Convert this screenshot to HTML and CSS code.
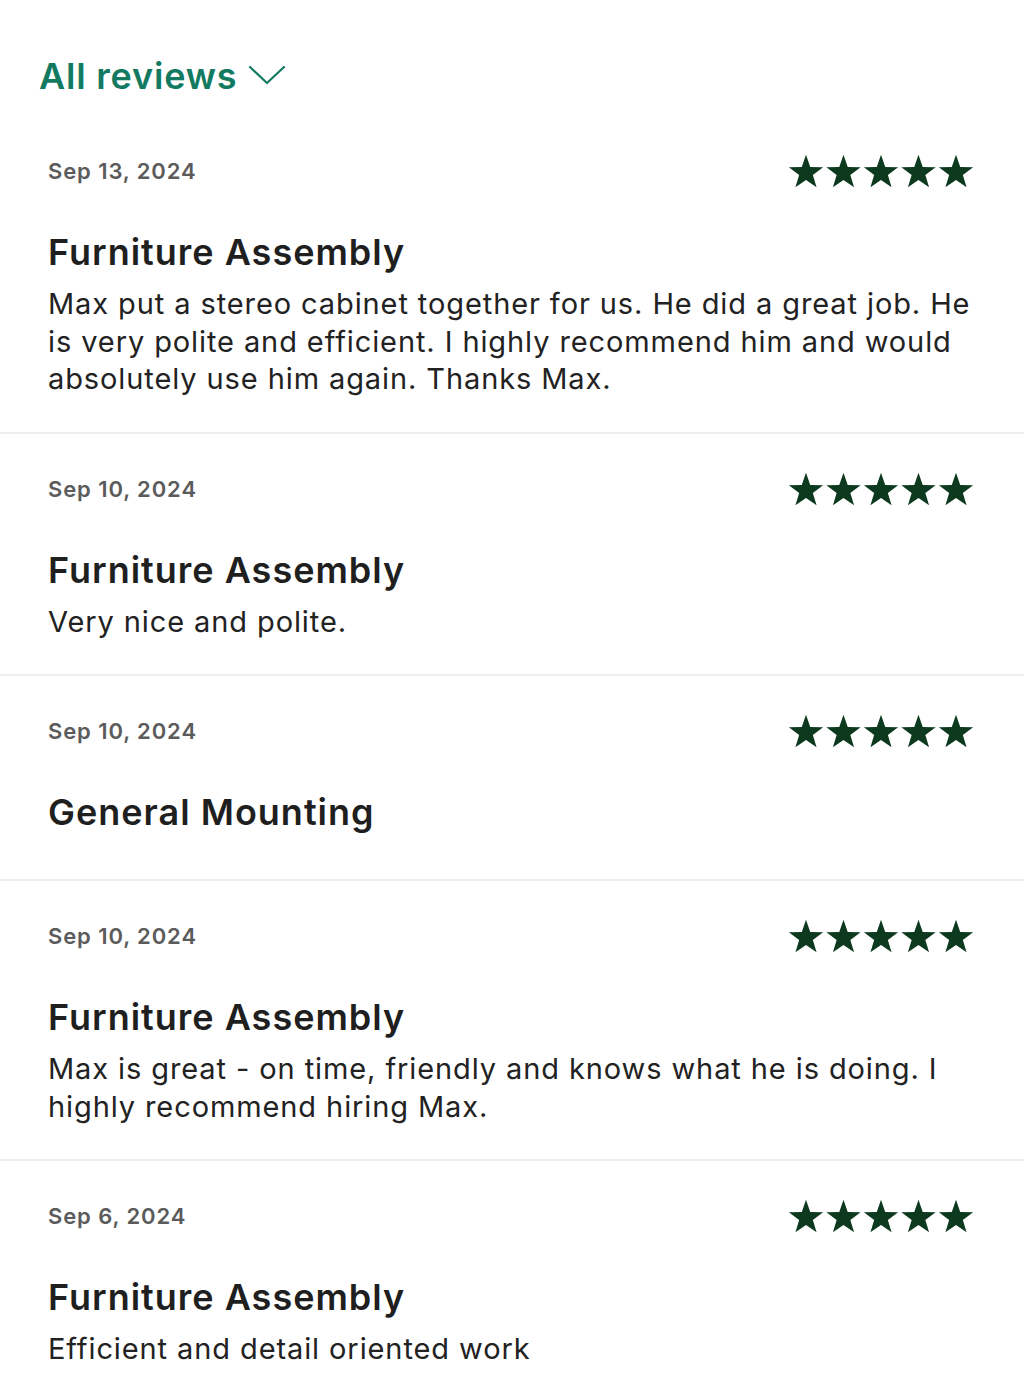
FILE: index.html
```html
<!DOCTYPE html>
<html lang="en">
<head>
<meta charset="utf-8">
<title>Reviews</title>
<link rel="stylesheet" href="styles.css">
</head>
<body>
<svg width="0" height="0" class="defs" aria-hidden="true">
  <defs>
    <path id="star" d="M0,-18 L4.23,-5.82 17.12,-5.56 6.85,2.22 10.58,14.56 0,7.2 -10.58,14.56 -6.85,2.22 -17.12,-5.56 -4.23,-5.82Z"/>
    <g id="stars5">
      <use href="#star" x="18" y="18.7"/>
      <use href="#star" x="55.5" y="18.7"/>
      <use href="#star" x="93" y="18.7"/>
      <use href="#star" x="130.5" y="18.7"/>
      <use href="#star" x="168" y="18.7"/>
    </g>
  </defs>
</svg>
<main class="page">
  <header class="filter">
    <span class="filter-label">All reviews</span>
    <svg class="chevron" width="38" height="24" viewBox="0 0 38 24"><path d="M2 4 L19 20 L36 4" fill="none" stroke="currentColor" stroke-width="2.2" stroke-linecap="round" stroke-linejoin="round"/></svg>
  </header>

  <section class="review">
    <div class="review-top">
      <span class="date">Sep 13, 2024</span>
      <svg class="stars" width="186" height="34" viewBox="0 0 186 34"><use href="#stars5"/></svg>
    </div>
    <h2 class="title">Furniture Assembly</h2>
    <p class="body">Max put a stereo cabinet together for us. He did a great job. He is very polite and efficient. I highly recommend him and would absolutely use him again. Thanks Max.</p>
  </section>

  <section class="review">
    <div class="review-top">
      <span class="date">Sep 10, 2024</span>
      <svg class="stars" width="186" height="34" viewBox="0 0 186 34"><use href="#stars5"/></svg>
    </div>
    <h2 class="title">Furniture Assembly</h2>
    <p class="body">Very nice and polite.</p>
  </section>

  <section class="review">
    <div class="review-top">
      <span class="date">Sep 10, 2024</span>
      <svg class="stars" width="186" height="34" viewBox="0 0 186 34"><use href="#stars5"/></svg>
    </div>
    <h2 class="title">General Mounting</h2>
  </section>

  <section class="review">
    <div class="review-top">
      <span class="date">Sep 10, 2024</span>
      <svg class="stars" width="186" height="34" viewBox="0 0 186 34"><use href="#stars5"/></svg>
    </div>
    <h2 class="title">Furniture Assembly</h2>
    <p class="body">Max is great - on time, friendly and knows what he is doing. I highly recommend hiring Max.</p>
  </section>

  <section class="review">
    <div class="review-top">
      <span class="date">Sep 6, 2024</span>
      <svg class="stars" width="186" height="34" viewBox="0 0 186 34"><use href="#stars5"/></svg>
    </div>
    <h2 class="title">Furniture Assembly</h2>
    <p class="body">Efficient and detail oriented work</p>
  </section>
</main>
</body>
</html>
```

FILE: styles.css
```css
html, body {
  margin: 0;
  padding: 0;
  background: #ffffff;
}

body {
  font-family: Inter, "Noto Sans", "Liberation Sans", sans-serif;
  color: #1f1f1f;
}

.defs {
  position: absolute;
  width: 0;
  height: 0;
  overflow: hidden;
}

.page {
  display: flex;
  flex-direction: column;
}

.filter {
  display: flex;
  align-items: center;
  gap: 11px;
  padding: 54px 0 0 39px;
  margin-bottom: 18px;
  color: #137a62;
}

.filter-label {
  font-size: 36px;
  line-height: 44px;
  font-weight: 600;
  letter-spacing: 0.8px;
}

.chevron {
  display: block;
  margin-top: -3px;
}

.review {
  padding: 41px 52px 34px 48px;
  border-bottom: 2px solid #eeeeee;
}

.review:last-child {
  border-bottom: none;
}

.review-top {
  display: flex;
  align-items: center;
  justify-content: space-between;
  height: 28px;
}

.date {
  font-size: 22px;
  line-height: 28px;
  font-weight: 600;
  color: #5b5b5b;
  letter-spacing: 0.9px;
}

.stars {
  display: block;
  fill: #0d3a1e;
  margin-right: -2px;
}

.title {
  margin: 45px 0 11px;
  font-size: 36px;
  line-height: 44px;
  font-weight: 600;
  color: #1f1f1f;
  letter-spacing: 1px;
}

.body {
  margin: 0 -6px 0 0;
  font-size: 29px;
  line-height: 37.5px;
  font-weight: 400;
  color: #222222;
  letter-spacing: 0.9px;
}
```
